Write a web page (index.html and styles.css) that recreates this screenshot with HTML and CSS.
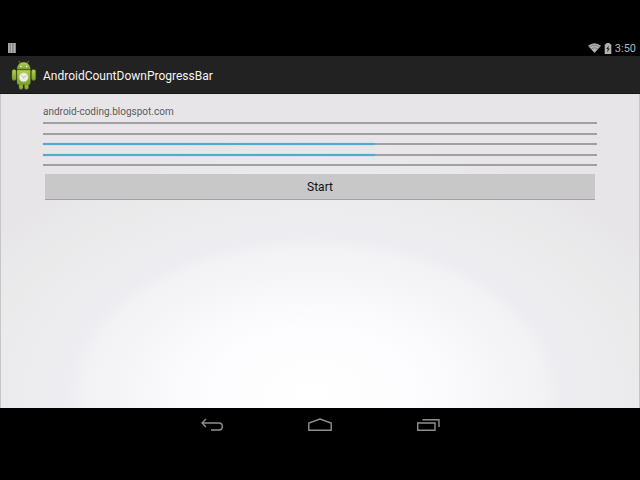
FILE: index.html
```html
<!DOCTYPE html>
<html lang="en">
<head>
<meta charset="utf-8">
<meta name="viewport" content="width=device-width, initial-scale=1">
<title>AndroidCountDownProgressBar</title>
<link rel="stylesheet" href="styles.css">
</head>
<body>
<div class="status-bar">
  <svg class="notice" width="8" height="10" viewBox="0 0 8 10" aria-hidden="true">
    <rect width="8" height="10" fill="#858585"/>
    <path d="M.8 0v10M3.5 0v10M6.3 0v10" stroke="#b0b0b0" stroke-width="1.3"/>
  </svg>
  <svg width="13" height="10" viewBox="0 0 13 10" aria-hidden="true">
    <path d="M0 2.800Q6.500-2.400 13 2.800L6.500 10Z" fill="#b0b0b0"/>
    <path d="M1.300 4.100Q6.500.2 11.700 4.100M3 6Q6.500 3.300 10 6" fill="none" stroke="#606060" stroke-width=".6"/>
  </svg>
  <svg width="8" height="11" viewBox="0 0 8 11" aria-hidden="true">
    <path d="M2.300 0h3.400v1.200H7.300V11H.7V1.200h1.600Z" fill="#b4b4b4"/>
    <path d="M4.900 2.600 2.200 6.100h1.600L3.200 9.300 5.900 5.600H4.300Z" fill="#222"/>
  </svg>
  <time class="clock">3:50</time>
</div>
<header class="app-bar">
  <svg width="26" height="30" viewBox="0 0 26 30" aria-hidden="true">
    <defs>
      <linearGradient id="green" x2="0" y2="1">
        <stop offset="0" stop-color="#b5d348"/>
        <stop offset="1" stop-color="#7c9f30"/>
      </linearGradient>
    </defs>
    <path d="M8 1.200 9.600 4M17.400 1.200 15.800 4" stroke="#7f9838" stroke-width=".8" stroke-linecap="round"/>
    <g fill="url(#green)" stroke="#577321" stroke-width=".4">
      <path d="M6 9.400C6 4.800 9.300 2.200 12.700 2.200S19.400 4.800 19.400 9.400Z"/>
      <rect x="1" y="9.500" width="4.200" height="11" rx="2"/>
      <rect x="20.500" y="9.500" width="4.200" height="11" rx="2"/>
      <rect x="8" y="21" width="4" height="8.500" rx="1.900"/>
      <rect x="13.500" y="21" width="4" height="8.500" rx="1.900"/>
      <path d="M6 10.100H19.400V22.800Q19.400 24.800 17.400 24.800H8Q6 24.800 6 22.800Z"/>
    </g>
    <circle cx="9.900" cy="6.500" r=".7" fill="#fff"/>
    <circle cx="15.600" cy="6.500" r=".7" fill="#fff"/>
    <circle cx="12.700" cy="17.300" r="4.500" fill="#eef2e6" stroke="#b9c99a" stroke-width=".6"/>
    <path d="M10.500 15.600 12.700 17.400 15.200 15.800M12.700 17.400V18.500" fill="none" stroke="#a3ac94" stroke-width=".8"/>
  </svg>
  <h1 class="title">AndroidCountDownProgressBar</h1>
</header>
<main class="content">
  <a class="site" href="#">android-coding.blogspot.com</a>
  <div class="bars">
    <progress aria-label="Countdown 1" max="100" value="0"></progress>
    <progress aria-label="Countdown 2" max="100" value="0"></progress>
    <progress aria-label="Countdown 3" max="100" value="60"></progress>
    <progress aria-label="Countdown 4" max="100" value="60"></progress>
    <progress aria-label="Countdown 5" max="100" value="0"></progress>
  </div>
  <button class="start" type="button">Start</button>
</main>
<nav class="nav-bar">
  <button type="button" aria-label="Back">
    <svg width="24" height="14" viewBox="0 0 24 14" aria-hidden="true"><path d="M6 1 2 5l4 4M2 5H19Q22.300 5 22.300 8.500T19 12H11"/></svg>
  </button>
  <button type="button" aria-label="Home">
    <svg width="24" height="14" viewBox="0 0 24 14" aria-hidden="true"><path d="M.8 12.200V5L12 1 23.200 5V12.200Z"/></svg>
  </button>
  <button type="button" aria-label="Recent apps">
    <svg width="24" height="14" viewBox="0 0 24 14" aria-hidden="true"><path d="M1.700 5H19V12.200H1.700ZM6.500 1.800H23V9"/></svg>
  </button>
</nav>
</body>
</html>
```
FILE: styles.css
```css
* {
  box-sizing: border-box;
}

body {
  margin: 0;
  min-height: 100vh;
  padding: 40px 0 38px;
  display: flex;
  flex-direction: column;
  background: #000;
  font-family: Roboto, sans-serif;
}

.status-bar {
  height: 16px;
  padding: 0 4px 0 8px;
  display: flex;
  align-items: center;
  gap: 3px;
}

.notice {
  margin-right: auto;
}

.clock {
  padding-top: 2px;
  color: #b8b8b8;
  font-size: 11px;
  line-height: 14px;
}

.app-bar {
  height: 38px;
  padding: 1px 11px 0;
  display: flex;
  align-items: center;
  gap: 6px;
  background: #222;
  border-bottom: 1px solid #161616;
}

.title {
  margin: 0;
  padding-top: 2px;
  color: #f4f4f4;
  font-size: 12px;
  font-weight: 400;
  line-height: 16px;
}

.content {
  flex: 1;
  padding: 10px 42px;
  display: flex;
  flex-direction: column;
  border: solid #c6c5c9;
  border-width: 0 1px;
  background: radial-gradient(ellipse 64% 82% at 49% 95%, #fff 0, #fdfcfe 25%, #f7f6f9 42%, #f2f1f3 56%, #eeedf1 60%, #eaeaeb 82%, #e7e5e8 100%);
}

.site {
  align-self: flex-start;
  color: #5c5b5e;
  font-size: 10px;
  line-height: 16px;
  text-decoration: none;
}

.bars {
  height: 44px;
  margin: 2px 0 8px;
  display: flex;
  flex-direction: column;
  justify-content: space-between;
}

progress {
  display: block;
  width: 100%;
  height: 2px;
  border: 0;
  appearance: none;
  background: #a09fa3;
}

progress::-webkit-progress-bar {
  background: #a09fa3;
}

progress::-webkit-progress-value {
  background: #54a9cf;
  box-shadow: 0 0 1px #54a9cf;
}

.start {
  height: 26px;
  margin: 0 2px;
  padding: 0;
  border: 0;
  border-bottom: 1px solid #a3a3a3;
  background: #c8c8c8;
  color: #111;
  font: 12px/16px Roboto, sans-serif;
}

.nav-bar {
  height: 34px;
  display: flex;
  justify-content: center;
  align-items: center;
  gap: 60px;
}

.nav-bar button {
  width: 48px;
  height: 32px;
  padding: 0;
  border: 0;
  background: none;
}

.nav-bar svg {
  display: block;
  margin: auto;
  fill: none;
  stroke: #8e8e8e;
  stroke-width: 1.4;
}
```
